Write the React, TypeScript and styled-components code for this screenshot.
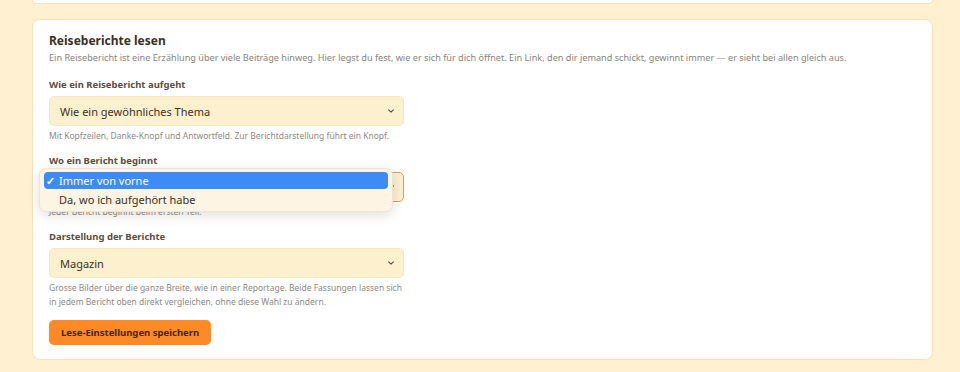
import styled, { createGlobalStyle } from "styled-components";

const GlobalStyle = createGlobalStyle`
  html, body {
    margin: 0;
    padding: 0;
    background-color: #fef0d1;
    font-family: "Noto Sans", "Liberation Sans", sans-serif;
  }
`;

const Page = styled.div`
  display: flex;
  flex-direction: column;
  gap: 15px;
  padding: 0 27px 11px 32px;
`;

const CardTail = styled.div`
  height: 3px;
  background-color: #ffffff;
  border: 1px solid #f5e3b6;
  border-top: none;
  border-radius: 0 0 8px 8px;
`;

const Card = styled.section`
  background-color: #ffffff;
  border: 1px solid #f5e3b6;
  border-radius: 8px;
  padding: 13px 16px 14px 16px;
  display: flex;
  flex-direction: column;
`;

const Title = styled.h2`
  margin: 0;
  font-size: 12px;
  line-height: 16px;
  font-weight: 700;
  color: #3b3024;
`;

const Intro = styled.p`
  margin: 2px 0 0 0;
  font-size: 9.15px;
  line-height: 13px;
  color: #8a847c;
`;

const Field = styled.div<{ $first?: boolean }>`
  position: relative;
  display: flex;
  flex-direction: column;
  width: 355px;
  margin-top: ${(p) => (p.$first ? "15px" : "12px")};
`;

const Label = styled.label`
  font-size: 9.5px;
  line-height: 12px;
  font-weight: 700;
  color: #5a4f42;
  margin-bottom: 5px;
`;

const SelectBox = styled.div<{ $focus?: boolean }>`
  height: 30px;
  box-sizing: border-box;
  display: flex;
  align-items: center;
  justify-content: space-between;
  padding: 0 8px 0 10px;
  background-color: #fdf0cf;
  border: 1px solid ${(p) => (p.$focus ? "#e8974a" : "#f6e6b8")};
  border-radius: 5px;
  font-size: 11px;
  color: #3b3024;
`;

const Help = styled.p`
  margin: 3px 0 0 0;
  font-size: 8.5px;
  line-height: 14px;
  color: #8f8982;
`;

const Menu = styled.div`
  position: absolute;
  left: -10px;
  top: 13px;
  width: 354px;
  box-sizing: border-box;
  padding: 3px 4px 3px 4px;
  background-color: #fdf4e3;
  border: 1px solid #ece4d8;
  border-radius: 7px;
  box-shadow: 0 3px 12px rgba(90, 70, 40, 0.18);
  display: flex;
  flex-direction: column;
  gap: 2px;
  z-index: 2;
`;

const MenuItem = styled.div<{ $active?: boolean }>`
  height: 17px;
  display: flex;
  align-items: center;
  border-radius: 4px;
  font-size: 11px;
  color: ${(p) => (p.$active ? "#ffffff" : "#3b3024")};
  background-color: ${(p) => (p.$active ? "#3d8cf5" : "transparent")};
`;

const Check = styled.span`
  width: 15px;
  padding-left: 2px;
  box-sizing: border-box;
  font-size: 11px;
  font-weight: 700;
`;

const Button = styled.button`
  margin-top: 11px;
  align-self: flex-start;
  height: 25px;
  padding: 0 12px;
  border: none;
  border-radius: 5px;
  background-color: #fd8a25;
  color: #4a2408;
  font-family: inherit;
  font-size: 9.5px;
  font-weight: 700;
`;

const Chevron = () => (
  <svg width="8" height="8" viewBox="0 0 10 10">
    <path d="M2 3.5 L5 6.5 L8 3.5" fill="none" stroke="#5a4f42" strokeWidth="1.4" strokeLinecap="round" strokeLinejoin="round" />
  </svg>
);

const App = () => {
  return (
    <>
      <GlobalStyle />
      <Page>
        <CardTail />
        <Card>
          <Title>Reiseberichte lesen</Title>
          <Intro>
            Ein Reisebericht ist eine Erzählung über viele Beiträge hinweg. Hier legst du fest, wie er sich für dich öffnet. Ein Link, den dir jemand schickt, gewinnt immer — er sieht bei allen gleich aus.
          </Intro>
          <Field $first>
            <Label>Wie ein Reisebericht aufgeht</Label>
            <SelectBox>
              <span>Wie ein gewöhnliches Thema</span>
              <Chevron />
            </SelectBox>
            <Help>Mit Kopfzeilen, Danke-Knopf und Antwortfeld. Zur Berichtdarstellung führt ein Knopf.</Help>
          </Field>
          <Field>
            <Label>Wo ein Bericht beginnt</Label>
            <SelectBox $focus>
              <span>Immer von vorne</span>
              <Chevron />
            </SelectBox>
            <Help>Jeder Bericht beginnt beim ersten Teil.</Help>
            <Menu>
              <MenuItem $active>
                <Check>✓</Check>Immer von vorne
              </MenuItem>
              <MenuItem>
                <Check />Da, wo ich aufgehört habe
              </MenuItem>
            </Menu>
          </Field>
          <Field>
            <Label>Darstellung der Berichte</Label>
            <SelectBox>
              <span>Magazin</span>
              <Chevron />
            </SelectBox>
            <Help>
              Grosse Bilder über die ganze Breite, wie in einer Reportage. Beide Fassungen lassen sich in jedem Bericht oben direkt vergleichen, ohne diese Wahl zu ändern.
            </Help>
          </Field>
          <Button>Lese-Einstellungen speichern</Button>
        </Card>
      </Page>
    </>
  );
};

export default App;
